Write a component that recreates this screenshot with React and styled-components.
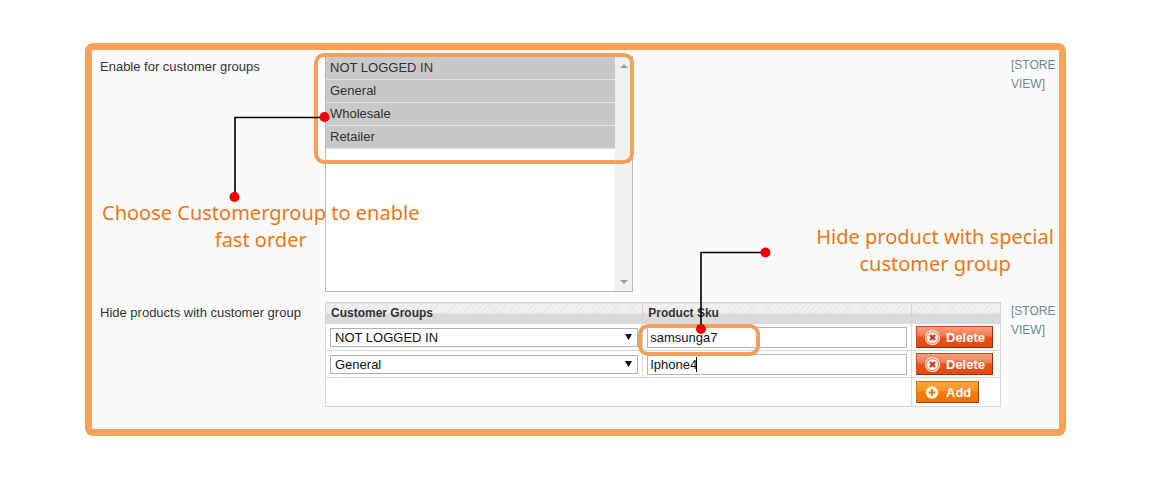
import React from "react";
import styled, { createGlobalStyle } from "styled-components";

const GlobalStyle = createGlobalStyle`
  *, *::before, *::after { box-sizing: border-box; }
  body {
    margin: 0;
    background: #fff;
    color: #333;
    font-family: "Liberation Sans", Arial, sans-serif;
    font-size: 13px;
  }
`;

const Page = styled.main`
  padding: 43px 86px 43px 85px;
`;

const Panel = styled.form`
  display: flex;
  flex-direction: column;
  gap: 10px;
  padding: 6px 0 22px 8px;
  background: #fafafa;
  border: 7px solid #f7a159;
  border-radius: 8px;
`;

const Row = styled.div`
  display: grid;
  grid-template-columns: 225px minmax(0, 1fr) 48px;
  column-gap: 10px;
  align-items: start;
`;

const Label = styled.label`
  line-height: 22px;
  white-space: nowrap;
`;

const Field = styled.div`
  position: relative;
  margin-left: -10px;
`;

const Scope = styled.div`
  color: #6f8992;
  font-size: 12px;
  line-height: 19px;
`;

const ListBox = styled.div`
  display: flex;
  width: 308px;
  height: 236px;
  background: #fff;
  border: 1px solid #b8b8b8;
`;

const GroupList = styled.select`
  flex: 1;
  min-width: 0;
  padding: 0;
  border: 0;
  outline: 0;
  border-radius: 0;
  background: #fff;
  font: inherit;
  overflow: hidden;
  scrollbar-width: none;
`;

const GroupOption = styled.option`
  height: 23px;
  min-height: 23px;
  padding: 3px 4px 0;
  border-bottom: 1px solid #e2e2e2;
  color: #333;
  &:checked {
    background: #c8c8c8 linear-gradient(#c8c8c8, #c8c8c8);
    color: #333;
  }
`;

const ScrollTrack = styled.div`
  display: flex;
  flex-direction: column;
  justify-content: space-between;
  align-items: center;
  width: 17px;
  padding: 7px 0;
  background: #f0f0f0;
`;

const Table = styled.table`
  width: 100%;
  table-layout: fixed;
  border-collapse: collapse;
  background: #fff;
  border: 1px solid #cbcbcb;
`;

const HeadCell = styled.th`
  width: ${(p) => p.$width};
  height: 21px;
  padding: 1px 5px 0;
  text-align: left;
  font-size: 12px;
  line-height: 19px;
  border: 1px solid #d2d2d2;
  border-bottom: 0;
  background:
    linear-gradient(transparent 50%, #dadada 50%),
    repeating-linear-gradient(135deg, #f1f1f1 0 3px, #e4e4e4 3px 4px);
`;

const Cell = styled.td`
  position: relative;
  height: ${(p) => (p.$last ? 29 : 27)}px;
  padding: 2px 4px;
  vertical-align: middle;
  border: 1px solid #d8d8d8;
`;

const SelectWrap = styled.div`
  position: relative;
  display: flex;
`;

const GroupSelect = styled.select`
  appearance: none;
  width: 100%;
  height: 19px;
  padding: 0 20px 0 4px;
  border: 1px solid #b0b0b0;
  border-radius: 0;
  background: #fff;
  color: #111;
  font: inherit;
`;

const Chevron = styled.svg`
  position: absolute;
  right: 6px;
  top: 6px;
  pointer-events: none;
`;

const SkuWrap = styled.div`
  position: relative;
  display: flex;
`;

const SkuInput = styled.input`
  width: 100%;
  height: 21px;
  padding: 0 2px;
  border: 1px solid #b5b5b5;
  border-radius: 0;
  background: #fff;
  color: #111;
  font: inherit;
`;

const Caret = styled.span`
  position: absolute;
  left: 49px;
  top: 3px;
  width: 1px;
  height: 15px;
  background: #000;
`;

const ActionButton = styled.button`
  display: inline-flex;
  align-items: center;
  gap: 5px;
  height: 22px;
  padding: 0 7px;
  vertical-align: top;
  border: 1px solid;
  border-color: ${(p) => (p.$danger ? "#d04a1c #9a2f0a #9a2f0a #d04a1c" : "#e07010 #a04300 #a04300 #e07010")};
  background: ${(p) =>
    p.$danger
      ? "linear-gradient(#f8a17e 0%, #f1794c 45%, #e9531f 50%, #e5480f 100%)"
      : "linear-gradient(#fba63c 0%, #f8922a 45%, #f27a0c 50%, #f07305 100%)"};
  color: #fff;
  font: bold 13px "Liberation Sans", Arial, sans-serif;
`;

const Highlight = styled.div`
  position: absolute;
  left: ${(p) => p.$left}px;
  top: ${(p) => p.$top}px;
  width: ${(p) => p.$width}px;
  height: ${(p) => p.$height}px;
  border: 4px solid #f2a05c;
  border-radius: 10px;
  pointer-events: none;
  z-index: 1;
`;

const Connector = styled.svg`
  position: absolute;
  left: ${(p) => p.$left}px;
  top: ${(p) => p.$top}px;
  pointer-events: none;
  z-index: 2;
`;

const Note = styled.p`
  position: absolute;
  left: ${(p) => p.$left}px;
  top: ${(p) => p.$top}px;
  margin: 0;
  color: #ea7617;
  font: 20px/27px "Noto Sans", "Open Sans", sans-serif;
  text-align: center;
  white-space: nowrap;
  pointer-events: none;
  z-index: 2;
`;

const DeleteIcon = () => (
  <svg width="17" height="17" viewBox="0 0 17 17" aria-hidden="true">
    <circle cx="8.500" cy="8.500" r="7" fill="#e4704c" stroke="#fbd3c2" strokeWidth="1.400" />
    <circle cx="8.500" cy="8.500" r="5.600" fill="#fff0ea" />
    <path d="M6 6l5 5M11 6l-5 5" stroke="#cf3a1e" strokeWidth="2.400" />
  </svg>
);

const AddIcon = () => (
  <svg width="17" height="17" viewBox="0 0 17 17" aria-hidden="true">
    <circle cx="8" cy="8.500" r="6.200" fill="#fff6e8" />
    <path d="M8 5v7M4.500 8.500h7" stroke="#ee7a10" strokeWidth="2" />
  </svg>
);

const GROUPS = ["NOT LOGGED IN", "General", "Wholesale", "Retailer"];
const RULES = [
  { group: "NOT LOGGED IN", sku: "samsunga7" },
  { group: "General", sku: "Iphone4", editing: true },
];

export default function App() {
  return (
    <>
      <GlobalStyle />
      <Page>
        <Panel onSubmit={(e) => e.preventDefault()}>
          <Row>
            <Label htmlFor="groups">Enable for customer groups</Label>
            <Field>
              <ListBox>
                <GroupList id="groups" multiple size={4} defaultValue={GROUPS}>
                  {GROUPS.map((g) => (
                    <GroupOption key={g}>{g}</GroupOption>
                  ))}
                </GroupList>
                <ScrollTrack aria-hidden="true">
                  <svg width="8" height="4"><path d="M0 4l4-4 4 4z" fill="#a0a0a0" /></svg>
                  <svg width="8" height="4"><path d="M0 0l4 4 4-4z" fill="#a0a0a0" /></svg>
                </ScrollTrack>
              </ListBox>
              <Highlight $left={-11} $top={-3} $width={320} $height={111} />
              <Connector $left={-97} $top={54} width="104" height="94">
                <path d="M7 87V7.500H96" fill="none" stroke="#000" strokeWidth="1.600" />
                <circle cx="6.500" cy="87" r="5" fill="#f00000" />
                <circle cx="96.500" cy="7" r="5" fill="#f00000" />
              </Connector>
              <Note $left={-223} $top={143}>
                Choose Customergroup to enable
                <br />
                fast order
              </Note>
            </Field>
            <Scope>[STORE VIEW]</Scope>
          </Row>

          <Row>
            <Label htmlFor="group-0">Hide products with customer group</Label>
            <Field>
              <Table>
                <thead>
                  <tr>
                    <HeadCell $width="47%">Customer Groups</HeadCell>
                    <HeadCell>Product Sku</HeadCell>
                    <HeadCell $width="89px" aria-label="Actions" />
                  </tr>
                </thead>
                <tbody>
                  {RULES.map((rule, i) => (
                    <tr key={rule.sku}>
                      <Cell>
                        <SelectWrap>
                          <GroupSelect id={`group-${i}`} aria-label="Customer group" defaultValue={rule.group}>
                            {GROUPS.map((g) => (
                              <option key={g}>{g}</option>
                            ))}
                          </GroupSelect>
                          <Chevron width="7" height="6">
                            <path d="M0 0h7l-3.500 6z" fill="#111" />
                          </Chevron>
                        </SelectWrap>
                      </Cell>
                      <Cell>
                        <SkuWrap>
                          <SkuInput aria-label="Product Sku" defaultValue={rule.sku} />
                          {rule.editing && <Caret />}
                        </SkuWrap>
                        {i === 0 && (
                          <>
                            <Highlight $left={-5} $top={0} $width={122} $height={32} />
                            <Connector $left={52} $top={-79} width="76" height="90">
                              <path d="M70 7.500H6V84" fill="none" stroke="#000" strokeWidth="1.600" />
                              <circle cx="70.500" cy="7.500" r="5" fill="#f00000" />
                              <circle cx="6" cy="84" r="5" fill="#f00000" />
                            </Connector>
                            <Note $left={173} $top={-101}>
                              Hide product with special
                              <br />
                              customer group
                            </Note>
                          </>
                        )}
                      </Cell>
                      <Cell>
                        <ActionButton type="button" $danger>
                          <DeleteIcon />
                          Delete
                        </ActionButton>
                      </Cell>
                    </tr>
                  ))}
                  <tr>
                    <Cell $last colSpan={2} />
                    <Cell $last>
                      <ActionButton type="button">
                        <AddIcon />
                        Add
                      </ActionButton>
                    </Cell>
                  </tr>
                </tbody>
              </Table>
            </Field>
            <Scope>[STORE VIEW]</Scope>
          </Row>
        </Panel>
      </Page>
    </>
  );
}
